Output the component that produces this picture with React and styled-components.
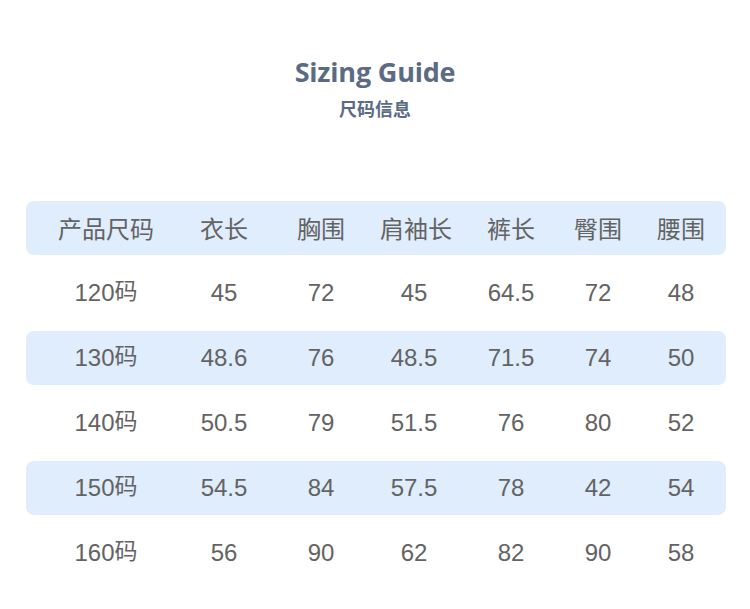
import React from "react";
import styled, { createGlobalStyle } from "styled-components";

const GlobalStyle = createGlobalStyle`
  html, body {
    margin: 0;
    padding: 0;
    background: #ffffff;
  }
  body {
    font-family: "Liberation Sans", "Noto Sans CJK SC", sans-serif;
  }
`;

const Page = styled.main`
  width: 750px;
  height: 609px;
  background: #ffffff;
  padding-top: 54px;
  box-sizing: border-box;
`;

const Heading = styled.header`
  display: flex;
  flex-direction: column;
  align-items: center;
  color: #5b6b86;
`;

const Title = styled.h1`
  margin: 0;
  font-family: "Open Sans", "Noto Sans", sans-serif;
  font-weight: 700;
  font-size: 27px;
  line-height: 36px;
  letter-spacing: -0.2px;
`;

const Subtitle = styled.h2`
  margin: 6px 0 0;
  font-family: "Noto Sans CJK SC", sans-serif;
  font-weight: 700;
  font-size: 18px;
  line-height: 24px;
`;

const Table = styled.section`
  margin: 81px 0 0 26px;
  width: 700px;
  display: flex;
  flex-direction: column;
  gap: 11px;
`;

const Row = styled.div`
  display: grid;
  grid-template-columns: 160px 76px 118px 68px 126px 48px 1fr;
  align-items: center;
  height: 54px;
  border-radius: 8px;
  background: ${(p) => (p.$shaded ? "#e0edfd" : "transparent")};
  color: #636363;
  font-size: 24px;
  line-height: 28px;
`;

const Cell = styled.div`
  text-align: center;
  white-space: nowrap;
  font-family: ${(p) =>
    p.$head
      ? '"Noto Sans CJK SC", sans-serif'
      : '"Liberation Sans", "Noto Sans CJK SC", sans-serif'};
  &:last-child {
    padding-left: 14px;
  }
`;

const Unit = styled.span`
  font-family: "Noto Sans CJK SC", sans-serif;
  font-size: 23px;
  line-height: 0;
  vertical-align: 2px;
`;

const headers = ["产品尺码", "衣长", "胸围", "肩袖长", "裤长", "臀围", "腰围"];

const rows = [
  ["120", "45", "72", "45", "64.5", "72", "48"],
  ["130", "48.6", "76", "48.5", "71.5", "74", "50"],
  ["140", "50.5", "79", "51.5", "76", "80", "52"],
  ["150", "54.5", "84", "57.5", "78", "42", "54"],
  ["160", "56", "90", "62", "82", "90", "58"],
];

export default function App() {
  return (
    <>
      <GlobalStyle />
      <Page>
        <Heading>
          <Title>Sizing Guide</Title>
          <Subtitle>尺码信息</Subtitle>
        </Heading>
        <Table>
          <Row $shaded>
            {headers.map((h) => (
              <Cell key={h} $head>
                {h}
              </Cell>
            ))}
          </Row>
          {rows.map((r, i) => (
            <Row key={r[0]} $shaded={i % 2 === 1}>
              {r.map((v, j) => (
                <Cell key={j}>
                  {v}
                  {j === 0 && <Unit>码</Unit>}
                </Cell>
              ))}
            </Row>
          ))}
        </Table>
      </Page>
    </>
  );
}
